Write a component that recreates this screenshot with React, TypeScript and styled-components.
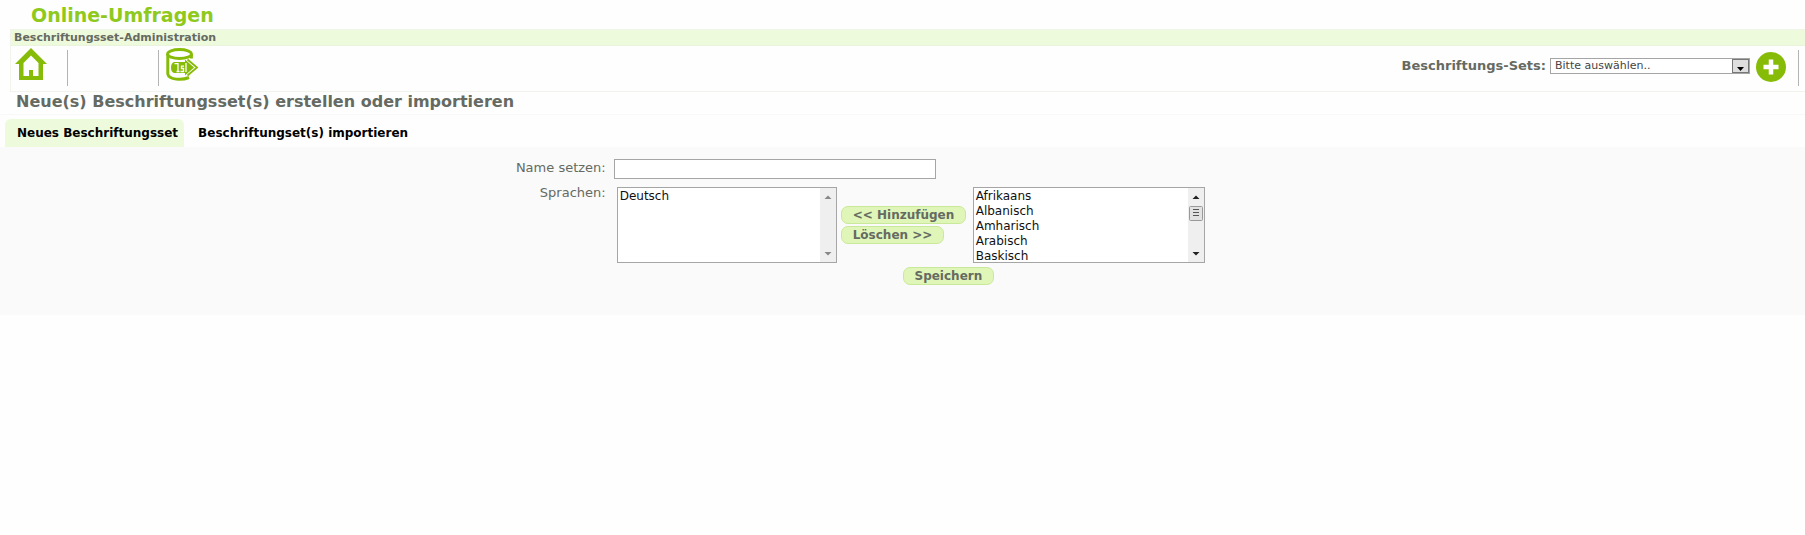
import React from 'react';
import styled, { createGlobalStyle, css } from 'styled-components';

const green = '#86bc07';
const grey = '#656a62';

const GlobalStyle = createGlobalStyle`
  * { box-sizing: border-box; }
  body {
    margin: 0;
    background: #fefefe;
    color: ${grey};
    font-family: Verdana, "DejaVu Sans", sans-serif;
    font-size: 13px;
  }
  button, input, select { font-family: inherit; margin: 0; }
`;

const SiteTitle = styled.h1`
  margin: 0;
  padding: 3px 0 2px 31px;
  font-size: 19px;
  line-height: 24px;
  color: #8fc91c;
`;

const MenuBar = styled.section`
  margin-left: 10px;
  border: 1px solid #f1f4ea;
  border-right: 0;
`;

const MenuTitle = styled.h2`
  margin: 0;
  padding-left: 3px;
  font-size: 11px;
  line-height: 15px;
  background: #eefadc;
`;

const Toolbar = styled.div`
  display: flex;
  justify-content: space-between;
  height: 46px;
  padding: 0 6px 0 4px;
  border-top: 1px solid #eaf3dc;
`;

const ToolGroup = styled.div`
  display: flex;
  align-items: flex-start;
`;

const Separator = styled.span<{ $before?: number; $after?: number }>`
  width: 1px;
  height: 36px;
  margin: 4px ${p => p.$after ?? 0}px 0 ${p => p.$before ?? 0}px;
  background: #b4b4b4;
`;

const IconLink = styled.a`
  display: block;
  width: 32px;
  height: 32px;
  margin-top: 2px;
  color: ${green};
  svg { display: block; }
`;

const AddButton = styled.button`
  width: 30px;
  height: 30px;
  margin: 6px 0 0 6px;
  padding: 0;
  border: 0;
  background: none;
  color: ${green};
  cursor: pointer;
  svg { display: block; }
`;

const SetLabel = styled.label`
  margin-right: 4px;
  font-weight: bold;
  line-height: 40px;
`;

const SelectBox = styled.div`
  display: flex;
  position: relative;
  width: 200px;
  height: 16px;
  margin-top: 12px;
`;

const SetSelect = styled.select`
  appearance: none;
  width: 100%;
  height: 100%;
  padding: 0 20px 0 4px;
  border: 1px solid #a5a5a5;
  border-radius: 0;
  background: #fff;
  color: #444;
  font-size: 11px;
  line-height: 14px;
`;

const SelectArrow = styled.svg`
  position: absolute;
  top: 1px;
  right: 1px;
  pointer-events: none;
`;

const PageHeading = styled.h3`
  margin: 0;
  padding: 1px 0 3px 16px;
  font-size: 16px;
  line-height: 18px;
`;

const Tabs = styled.nav`
  display: flex;
  padding: 4px 5px 0;
  border-top: 1px solid #f8f8f8;
`;

const Tab = styled.a<{ $active?: boolean }>`
  padding: 0 6px 0 12px;
  margin-right: 2px;
  border-radius: 6px 6px 0 0;
  font-size: 12px;
  font-weight: bold;
  line-height: 28px;
  color: #000;
  text-decoration: none;
  ${p => p.$active && css`background: #eefadc;`}
`;

const Panel = styled.form`
  padding: 12px 0 30px;
  background: #fafafa;
`;

const Row = styled.div`
  display: grid;
  grid-template-columns: 34% 1fr;
  margin-bottom: 8px;
`;

const FieldLabel = styled.label<{ $lineHeight: number }>`
  padding-right: 8px;
  text-align: right;
  line-height: ${p => p.$lineHeight}px;
`;

const NameInput = styled.input`
  width: 322px;
  height: 20px;
  padding: 0 3px;
  border: 1px solid #a5a5a5;
  background: #fff;
  font-size: 13px;
`;

const Languages = styled.div`
  display: flex;
  align-items: center;
  padding-left: 3px;
`;

const ListFrame = styled.div<{ $width: number }>`
  display: flex;
  width: ${p => p.$width}px;
  height: 76px;
  border: 1px solid #a5a5a5;
  background: #fff;
`;

const List = styled.select`
  appearance: none;
  flex: 1;
  min-width: 0;
  height: 74px;
  padding: 1px 0 0;
  border: 0;
  border-radius: 0;
  outline: 0;
  background: #fff;
  font-size: 12px;
  scrollbar-width: none;
  overflow-y: scroll;
  option {
    height: 15px;
    min-height: 15px;
    padding: 0 2px;
    line-height: 15px;
    color: #101010;
  }
`;

const Moves = styled.div`
  display: flex;
  flex-direction: column;
  align-items: flex-start;
  gap: 2px;
  width: 136px;
  padding-left: 4px;
`;

const PillButton = styled.button`
  height: 18px;
  padding: 1px 11px 0;
  border: 1px solid #c9e99a;
  border-radius: 7px;
  background: #e0f6b9;
  color: ${grey};
  font-size: 12px;
  font-weight: bold;
  line-height: 15px;
  white-space: nowrap;
  cursor: pointer;
`;

const Actions = styled.div`
  padding-left: 50%;
  margin-top: -4px;
`;

const ScrollBar = ({ active }: { active?: boolean }) => (
  <svg width="16" height="74" aria-hidden="true">
    <rect width="16" height="74" fill="#efefef" />
    <path d="M4.500 11h7L8 7.500z M4.500 64h7L8 67.500z" fill={active ? '#222' : '#888'} />
    {active && (
      <>
        <rect x="1.500" y="18.500" width="13" height="14" rx="1" fill="#e2e2e2" stroke="#999" />
        <path d="M5 21.500h6M5 24.500h6M5 27.500h6" stroke="#555" />
      </>
    )}
  </svg>
);

const HomeIcon = () => (
  <svg width="32" height="32" viewBox="0 0 32 32" fill="currentColor">
    <path fillRule="evenodd" d="M16 0L32 16H28V32H4V16H0zM16 7.500L8.500 15V28H14V22H18V28H23.500V15z" />
  </svg>
);

const ExportIcon = () => (
  <svg width="34" height="34" viewBox="0 0 34 34" fill="none" stroke="currentColor">
    <ellipse cx="13.500" cy="6" rx="12" ry="4.500" strokeWidth="2.800" />
    <path d="M1.800 6V26C3 32 16 32.500 23 29.500M25.400 6V10.500" strokeWidth="3" />
    <path d="M21.500 11.500L31 19.500L21.500 27.500" strokeWidth="1.800" />
    <path d="M8 14H19V11.500L28 19.500L19 27.500V25H8Q5 24 5 19.500T8 14z" fill="currentColor" stroke="none" />
    <path d="M8.500 15.700H12V23.500M10.500 23.500H13.500M18 18.200H15.500V20.500H17.500V23.500H14.500M20 15V24" stroke="#fefefe" strokeWidth="1.300" />
  </svg>
);

const PlusIcon = () => (
  <svg width="30" height="30" viewBox="0 0 30 30">
    <circle cx="15" cy="15" r="15" fill="currentColor" />
    <path d="M15 7.500V22.500M7.500 15H22.500" stroke="#fff" strokeWidth="4.500" />
  </svg>
);

const languages = ['Afrikaans', 'Albanisch', 'Amharisch', 'Arabisch', 'Baskisch'];

export default function App() {
  return (
    <>
      <GlobalStyle />
      <header>
        <SiteTitle>Online-Umfragen</SiteTitle>
        <MenuBar>
          <MenuTitle>Beschriftungsset-Administration</MenuTitle>
          <Toolbar>
            <ToolGroup>
              <IconLink href="#home" aria-label="Startseite"><HomeIcon /></IconLink>
              <Separator $before={20} $after={90} />
              <Separator $after={7} />
              <IconLink href="#export" aria-label="Exportieren"><ExportIcon /></IconLink>
            </ToolGroup>
            <ToolGroup>
              <SetLabel htmlFor="sets">Beschriftungs-Sets:</SetLabel>
              <SelectBox>
                <SetSelect id="sets">
                  <option>Bitte auswählen..</option>
                </SetSelect>
                <SelectArrow width="17" height="14" aria-hidden="true">
                  <rect x="0.500" y="0.500" width="16" height="13" fill="#dedede" stroke="#777" />
                  <path d="M5 8h7l-3.500 4z" fill="#000" />
                </SelectArrow>
              </SelectBox>
              <AddButton type="button" aria-label="Hinzufügen"><PlusIcon /></AddButton>
              <Separator $before={12} />
            </ToolGroup>
          </Toolbar>
        </MenuBar>
      </header>
      <main>
        <PageHeading>Neue(s) Beschriftungsset(s) erstellen oder importieren</PageHeading>
        <Tabs>
          <Tab href="#neu" $active>Neues Beschriftungsset</Tab>
          <Tab href="#import">Beschriftungset(s) importieren</Tab>
        </Tabs>
        <Panel onSubmit={e => e.preventDefault()}>
          <Row>
            <FieldLabel htmlFor="name" $lineHeight={18}>Name setzen:</FieldLabel>
            <NameInput id="name" type="text" />
          </Row>
          <Row>
            <FieldLabel htmlFor="chosen" $lineHeight={12}>Sprachen:</FieldLabel>
            <Languages>
              <ListFrame $width={220}>
                <List id="chosen" size={5} multiple>
                  <option>Deutsch</option>
                </List>
                <ScrollBar />
              </ListFrame>
              <Moves>
                <PillButton type="button">&lt;&lt; Hinzufügen</PillButton>
                <PillButton type="button">Löschen &gt;&gt;</PillButton>
              </Moves>
              <ListFrame $width={232}>
                <List size={5} multiple aria-label="Verfügbare Sprachen">
                  {languages.map(name => <option key={name}>{name}</option>)}
                </List>
                <ScrollBar active />
              </ListFrame>
            </Languages>
          </Row>
          <Actions>
            <PillButton type="submit">Speichern</PillButton>
          </Actions>
        </Panel>
      </main>
    </>
  );
}
